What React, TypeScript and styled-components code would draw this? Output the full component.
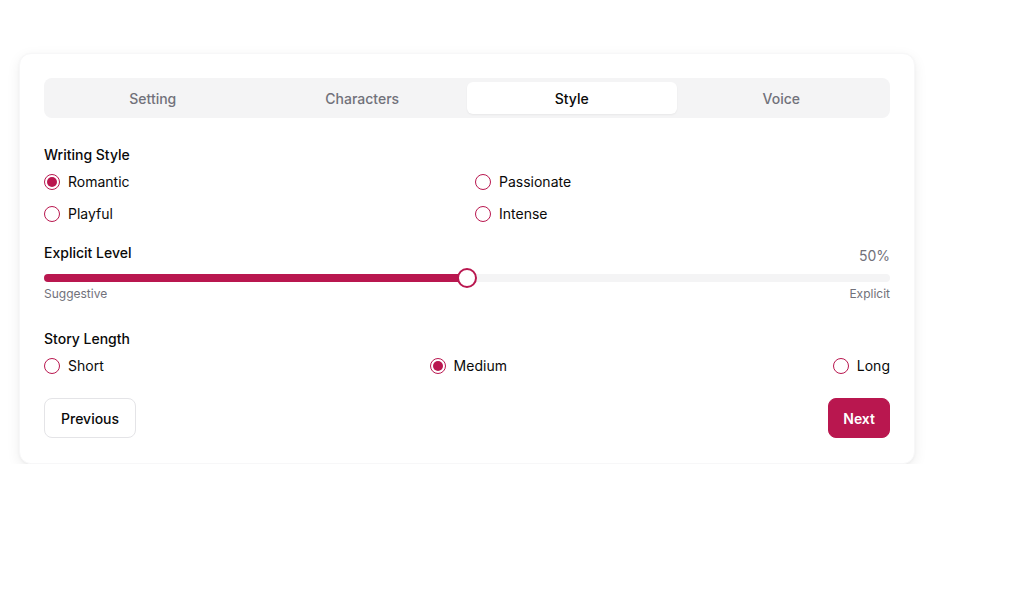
import { useState } from 'react';
import styled, { createGlobalStyle } from 'styled-components';

const accent = '#b9174f';

const GlobalStyle = createGlobalStyle`
  body {
    margin: 0;
    background: #ffffff;
    font-family: Inter, 'Noto Sans', sans-serif;
    color: #0a0a0a;
  }
`;

const Page = styled.div`
  padding: 53px 0 0 19px;
`;

const Card = styled.div`
  width: 896px;
  box-sizing: border-box;
  background: #fff;
  border: 1px solid #f7f7f8;
  border-radius: 12px;
  padding: 24px 24px 25px;
  box-shadow: 0 4px 14px rgba(0, 0, 0, 0.07), 0 1px 3px rgba(0, 0, 0, 0.04);
`;

const Tabs = styled.div`
  display: grid;
  grid-template-columns: repeat(4, 1fr);
  background: #f4f4f5;
  border-radius: 8px;
  padding: 4px;
  height: 40px;
  box-sizing: border-box;
  margin-bottom: 27px;
`;

const Tab = styled.button<{ $active?: boolean }>`
  border: none;
  border-radius: 6px;
  font-family: inherit;
  font-size: 14px;
  font-weight: 500;
  background: ${({ $active }) => ($active ? '#ffffff' : 'transparent')};
  color: ${({ $active }) => ($active ? '#0a0a0a' : '#71717a')};
  box-shadow: ${({ $active }) => ($active ? '0 1px 2px rgba(0,0,0,0.05)' : 'none')};
  cursor: pointer;
`;

const Section = styled.div<{ $gap?: number }>`
  margin-top: ${({ $gap }) => $gap ?? 0}px;
`;

const Label = styled.div`
  font-size: 14px;
  font-weight: 500;
  line-height: 20px;
`;

const TwoCols = styled.div`
  display: grid;
  grid-template-columns: 1fr 1fr;
  column-gap: 16px;
  row-gap: 12px;
  margin-top: 7px;
`;

const SpreadRow = styled.div`
  display: flex;
  justify-content: space-between;
  margin-top: 7px;
`;

const Option = styled.label`
  display: flex;
  align-items: center;
  gap: 8px;
  font-size: 14px;
  line-height: 20px;
  cursor: pointer;
`;

const Circle = styled.span<{ $checked?: boolean }>`
  width: 16px;
  height: 16px;
  box-sizing: border-box;
  border-radius: 50%;
  border: 1px solid ${accent};
  display: flex;
  align-items: center;
  justify-content: center;

  &::after {
    content: '';
    width: 10px;
    height: 10px;
    border-radius: 50%;
    background: ${accent};
    display: ${({ $checked }) => ($checked ? 'block' : 'none')};
  }
`;

const LabelRow = styled.div`
  display: flex;
  justify-content: space-between;
  align-items: flex-end;
`;

const Percent = styled.span`
  font-size: 14px;
  color: #71717a;
  line-height: 14px;
`;

const Track = styled.div`
  position: relative;
  height: 8px;
  border-radius: 4px;
  background: #f4f4f5;
  margin-top: 11px;
`;

const Fill = styled.div`
  height: 100%;
  border-radius: 4px;
  background: ${accent};
`;

const Thumb = styled.div`
  position: absolute;
  top: 50%;
  width: 20px;
  height: 20px;
  box-sizing: border-box;
  border-radius: 50%;
  border: 2px solid ${accent};
  background: #fff;
  transform: translate(-50%, -50%);
`;

const Ends = styled.div`
  display: flex;
  justify-content: space-between;
  font-size: 12px;
  color: #71717a;
  margin-top: 4px;
`;

const Footer = styled.div`
  display: flex;
  justify-content: space-between;
  margin-top: 22px;
`;

const Button = styled.button<{ $primary?: boolean }>`
  height: 40px;
  padding: ${({ $primary }) => ($primary ? '0 14px' : '0 16px')};
  border-radius: 8px;
  font-family: inherit;
  font-size: 14px;
  font-weight: ${({ $primary }) => ($primary ? 600 : 500)};
  border: 1px solid ${({ $primary }) => ($primary ? accent : '#e4e4e7')};
  background: ${({ $primary }) => ($primary ? accent : '#fff')};
  color: ${({ $primary }) => ($primary ? '#fff' : '#0a0a0a')};
  cursor: pointer;
`;

const tabs = ['Setting', 'Characters', 'Style', 'Voice'];
const styles = ['Romantic', 'Passionate', 'Playful', 'Intense'];
const lengths = ['Short', 'Medium', 'Long'];

export default function App() {
  const [tab, setTab] = useState('Style');
  const [style, setStyle] = useState('Romantic');
  const [length, setLength] = useState('Medium');
  const level = 50;

  return (
    <Page>
      <GlobalStyle />
      <Card>
        <Tabs>
          {tabs.map((t) => (
            <Tab key={t} $active={t === tab} onClick={() => setTab(t)}>
              {t}
            </Tab>
          ))}
        </Tabs>

        <Section>
          <Label>Writing Style</Label>
          <TwoCols>
            {styles.map((s) => (
              <Option key={s} onClick={() => setStyle(s)}>
                <Circle $checked={s === style} />
                {s}
              </Option>
            ))}
          </TwoCols>
        </Section>

        <Section $gap={19}>
          <LabelRow>
            <Label>Explicit Level</Label>
            <Percent>{level}%</Percent>
          </LabelRow>
          <Track>
            <Fill style={{ width: `${level}%` }} />
            <Thumb style={{ left: `${level}%` }} />
          </Track>
          <Ends>
            <span>Suggestive</span>
            <span>Explicit</span>
          </Ends>
        </Section>

        <Section $gap={28}>
          <Label>Story Length</Label>
          <SpreadRow>
            {lengths.map((l) => (
              <Option key={l} onClick={() => setLength(l)}>
                <Circle $checked={l === length} />
                {l}
              </Option>
            ))}
          </SpreadRow>
        </Section>

        <Footer>
          <Button>Previous</Button>
          <Button $primary>Next</Button>
        </Footer>
      </Card>
    </Page>
  );
}
